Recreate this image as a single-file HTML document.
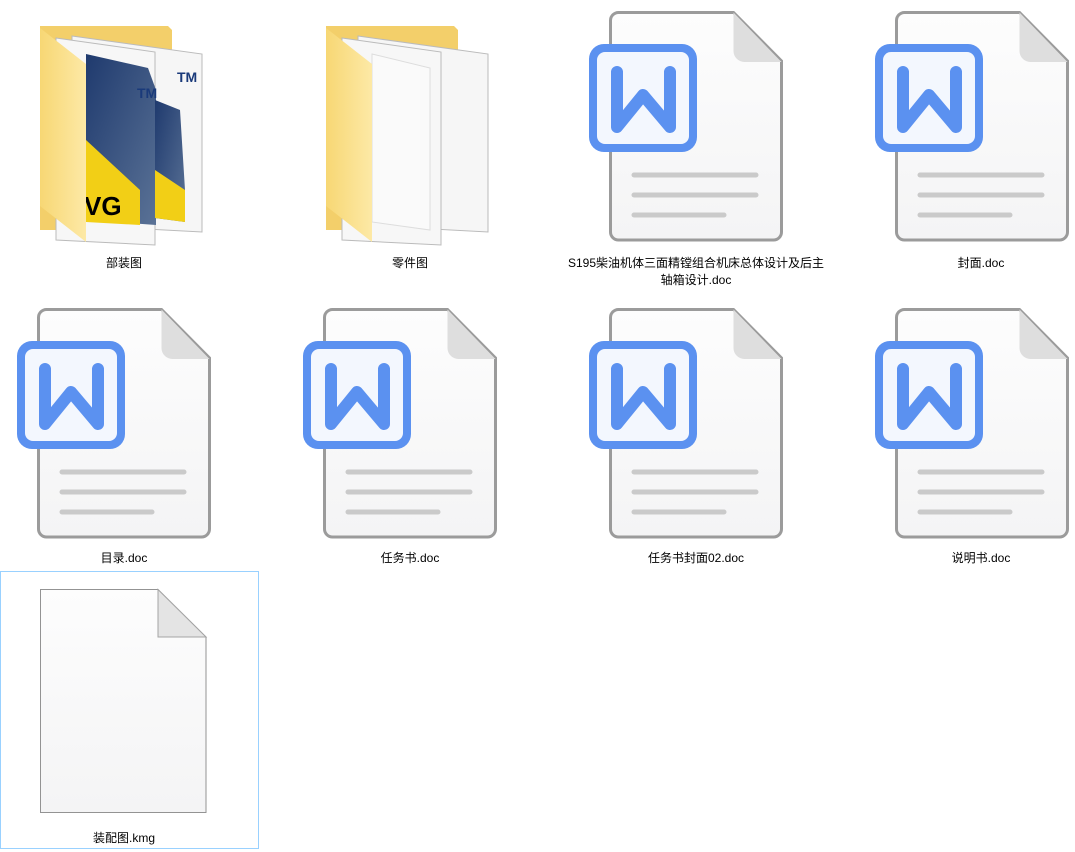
<!DOCTYPE html>
<html><head><meta charset="utf-8"><style>
html,body{margin:0;padding:0;background:#fff;width:1075px;height:852px;overflow:hidden;position:relative;font-family:"Liberation Sans","Microsoft YaHei","Noto Sans CJK SC",sans-serif;}
.lbl{position:absolute;font-size:12px;color:#000;text-align:center;width:286px;line-height:17px;}
svg{position:absolute;left:0;top:0;}
</style></head><body>
<svg width="1075" height="852" viewBox="0 0 1075 852">
<defs>
<linearGradient id="pg" x1="0" y1="0" x2="0" y2="1"><stop offset="0" stop-color="#fdfdfd"/><stop offset="1" stop-color="#f4f4f5"/></linearGradient>
<linearGradient id="fd" x1="0" y1="0" x2="1" y2="0"><stop offset="0" stop-color="#f7d774"/><stop offset="1" stop-color="#fde9a6"/></linearGradient>
<linearGradient id="bl" x1="0" y1="0" x2="1" y2="1"><stop offset="0" stop-color="#1f3a6e"/><stop offset="1" stop-color="#5a7296"/></linearGradient>
<g id="doc">
<path d="M8 1.5 H123 L171 50 V221 a8 8 0 0 1 -8 8 H8 a8 8 0 0 1 -8 -8 V9.5 a8 8 0 0 1 8 -8Z" transform="translate(1.5,0)" fill="url(#pg)" stroke="#9b9b9b" stroke-width="3"/>
<path d="M124.5 1.5 V40 a11 11 0 0 0 11 11 H172.5Z" fill="#dedede"/>
<rect x="-20" y="33" width="108" height="108" rx="15" fill="#5b91f0"/>
<rect x="-12" y="41" width="92" height="92" rx="8" fill="#f3f7fe"/>
<path d="M8 61 V116 L34 84 L61 116 V61" fill="none" stroke="#5b91f0" stroke-width="12" stroke-linecap="round" stroke-linejoin="round"/>
<path d="M25 164 H147 M25 184 H147 M25 204 H115" stroke="#cacaca" stroke-width="5" stroke-linecap="round"/>
</g>
</defs>
<use href="#doc" x="609" y="11"/>
<use href="#doc" x="895" y="11"/>
<use href="#doc" x="37" y="308"/>
<use href="#doc" x="323" y="308"/>
<use href="#doc" x="609" y="308"/>
<use href="#doc" x="895" y="308"/>

<path d="M40 26 H168 L172 30 V230 H40Z" fill="#f3cf6a"/>
<path d="M72 36 L202 54 V232 L72 225Z" fill="#f6f6f6" stroke="#bbb"/>
<path d="M56 38 L155 52 V245 L56 240Z" fill="#f7f7f7" stroke="#bbb"/>
<path d="M86 54 L148 68 L156 90 V225 L86 220Z" fill="url(#bl)"/>
<path d="M86 140 L140 190 L140 225 L86 222Z" fill="#f2cf16"/>
<path d="M155 100 L180 110 L185 190 V222 L155 218Z" fill="url(#bl)"/>
<path d="M155 170 L185 190 V222 L155 218Z" fill="#f2cf16"/>
<text x="84" y="215" font-family="Liberation Sans" font-weight="bold" font-size="26" fill="#000">VG</text>
<text x="137" y="98" font-family="Liberation Sans" font-weight="bold" font-size="14" fill="#1a3a7a">TM</text>
<text x="177" y="82" font-family="Liberation Sans" font-weight="bold" font-size="14" fill="#1a3a7a">TM</text>
<path d="M40 28 L86 64 V242 L40 206Z" fill="url(#fd)"/>

<path d="M326 26 H454 L458 30 V230 H326Z" fill="#f3cf6a"/>
<path d="M358 36 L488 54 V232 L358 225Z" fill="#f6f6f6" stroke="#bbb"/>
<path d="M342 38 L441 52 V245 L342 240Z" fill="#f7f7f7" stroke="#bbb"/>
<path d="M372 54 L430 68 V230 L372 222Z" fill="#fafafa" stroke="#ddd"/>
<path d="M326 28 L372 64 V242 L326 206Z" fill="url(#fd)"/>

<rect x="0.5" y="571.5" width="258" height="277" fill="none" stroke="#99d1ff"/>
<path d="M40.5 589.5 H158 L206 637 V812.5 H40.5Z" fill="url(#pg)" stroke="#939393"/>
<path d="M158 589.5 V637 H206Z" fill="#e4e4e4" stroke="#a5a5a5"/>
</svg>
<div class="lbl" style="left:-19px;top:255px">部装图</div>
<div class="lbl" style="left:267px;top:255px">零件图</div>
<div class="lbl" style="left:553px;top:255px">S195柴油机体三面精镗组合机床总体设计及后主<br>轴箱设计.doc</div>
<div class="lbl" style="left:838px;top:255px">封面.doc</div>
<div class="lbl" style="left:-19px;top:550px">目录.doc</div>
<div class="lbl" style="left:267px;top:550px">任务书.doc</div>
<div class="lbl" style="left:553px;top:550px">任务书封面02.doc</div>
<div class="lbl" style="left:838px;top:550px">说明书.doc</div>
<div class="lbl" style="left:-19px;top:830px">装配图.kmg</div>
</body></html>
